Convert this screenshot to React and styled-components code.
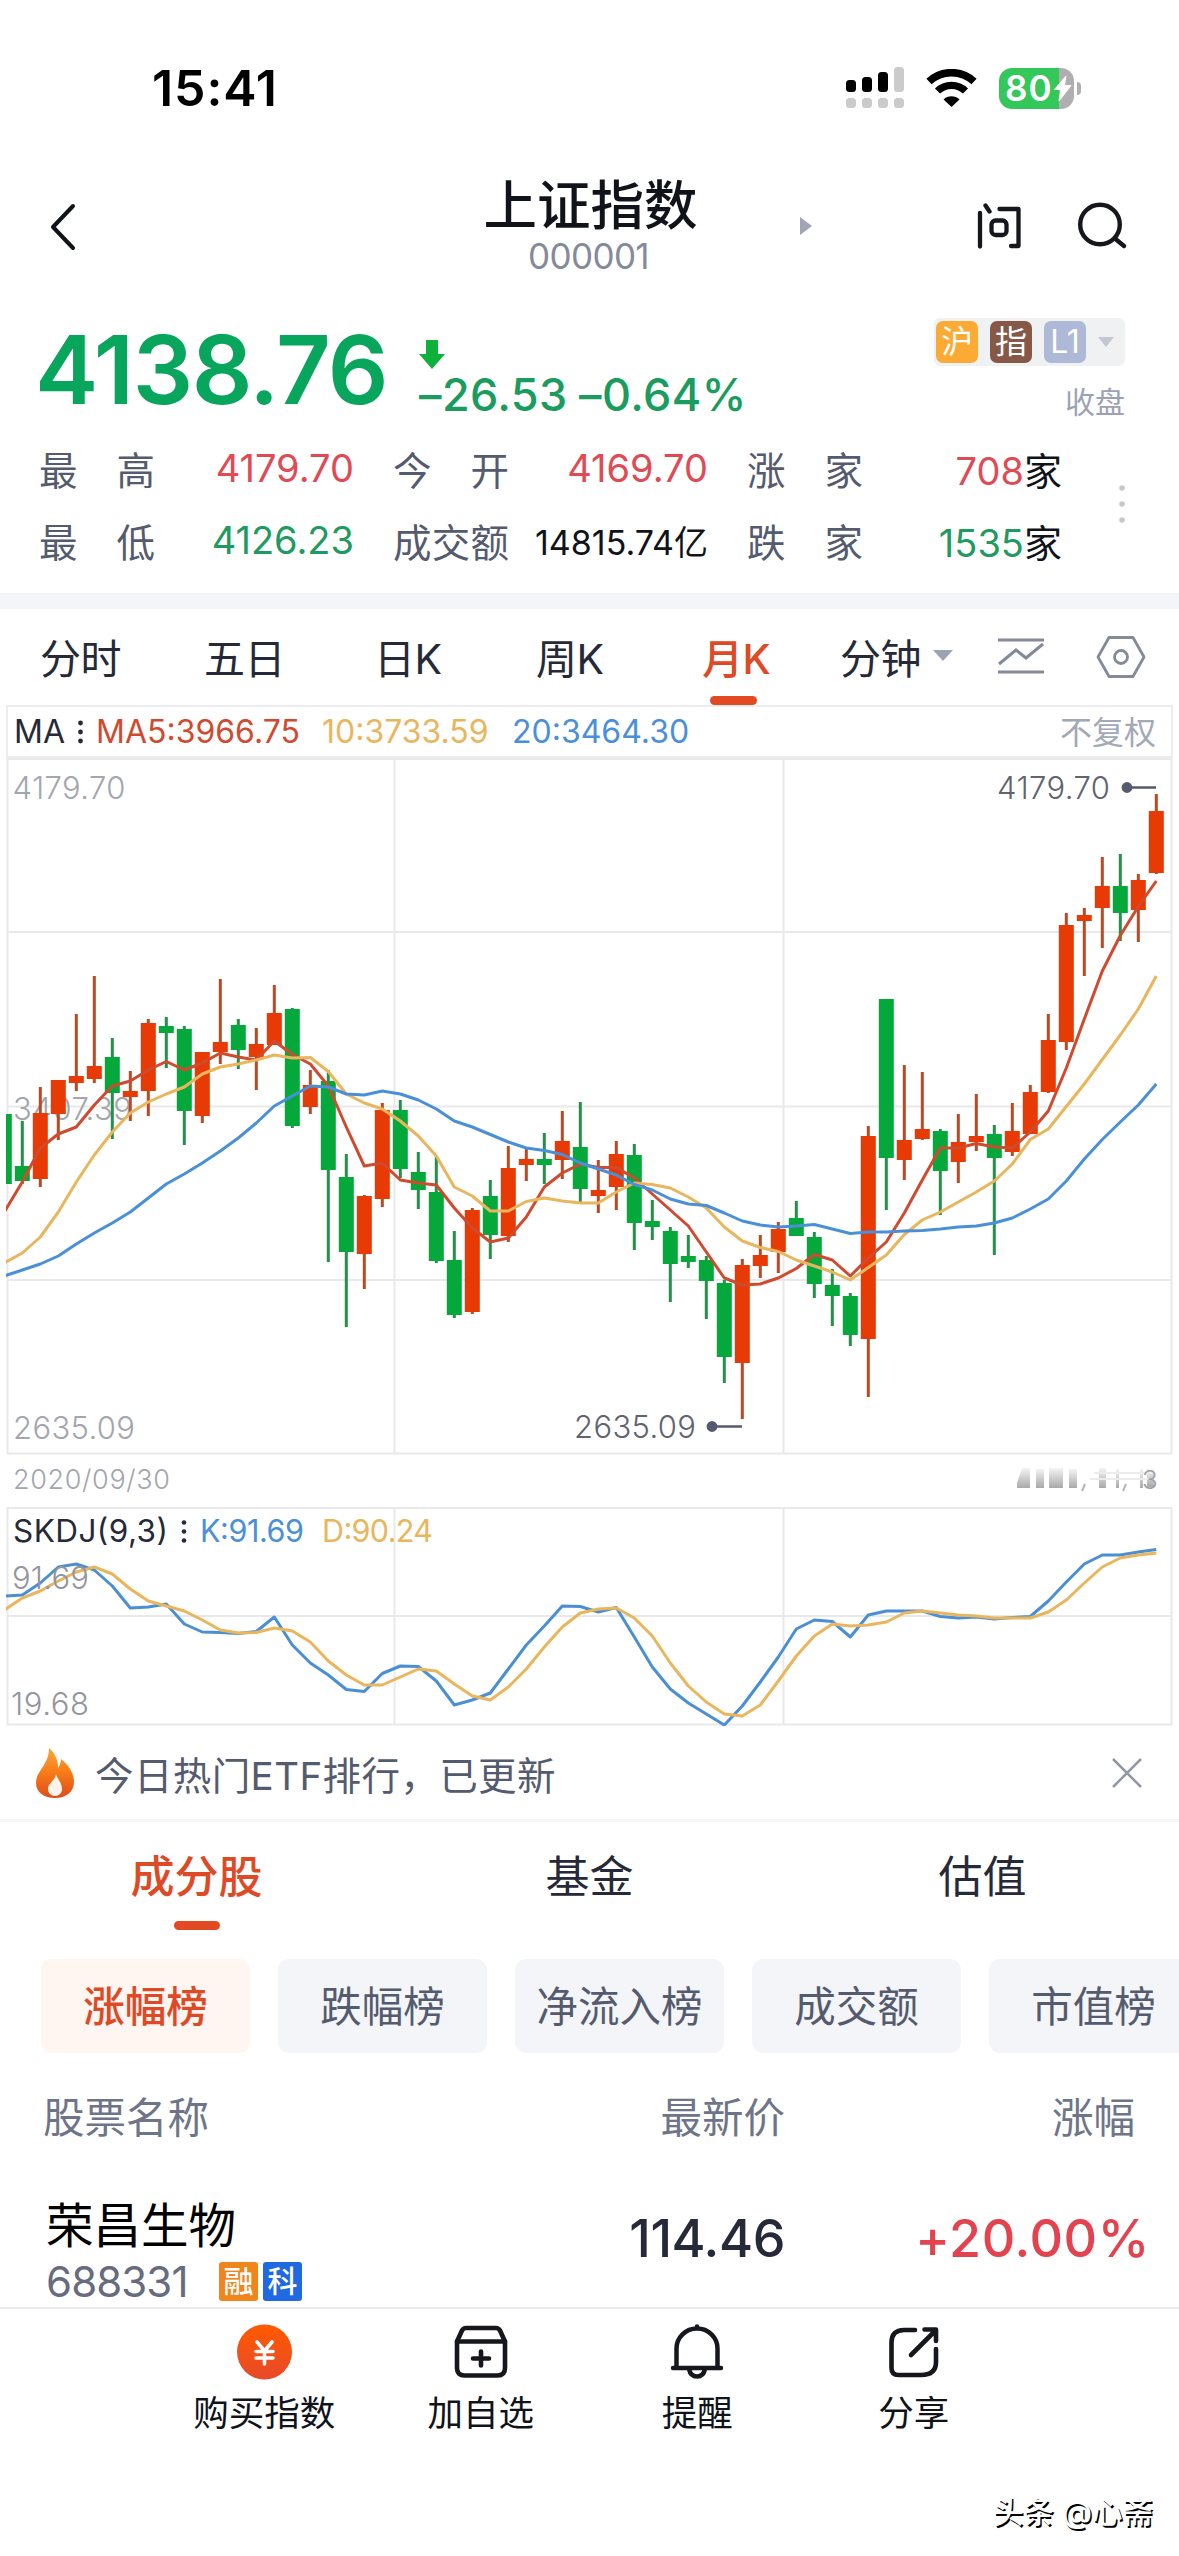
import React from 'react';
import styled, { createGlobalStyle } from 'styled-components';

const RED = '#e73a05';
const GREEN = '#05a93b';

const GlobalStyle = createGlobalStyle`
  * {
    box-sizing: border-box;
  }

  body {
    margin: 0;
    background: #ffffff;
    font-family: Inter, 'Noto Sans CJK SC', sans-serif;
  }

  svg {
    display: block;
    flex: none;
  }
`;

const Page = styled.div`
  width: 1179px;
  height: 2556px;
  overflow: hidden;
  background: #ffffff;
  color: #10131a;
  white-space: nowrap;
`;

const StatusBar = styled.div`
  display: flex;
  align-items: center;
  justify-content: space-between;
  height: 176px;
  padding: 0 98px 0 152px;
`;

const Clock = styled.div`
  font-size: 50px;
  font-weight: 600;
  letter-spacing: 0.9px;
  color: #000000;
`;

const StatusIcons = styled.div`
  display: flex;
  align-items: center;
`;

const SignalSvg = styled.svg`
  margin-right: 22px;
`;

const Battery = styled.div`
  display: flex;
  align-items: center;
  margin-left: 22px;
`;

const BatteryBody = styled.div`
  display: flex;
  align-items: center;
  gap: 1px;
  width: 75px;
  height: 41px;
  padding-left: 6px;
  border-radius: 13px;
  background: linear-gradient(90deg, #34c759 0 60px, #b0aeb0 60px);
  color: #ffffff;
  font-size: 35px;
  font-weight: 600;
  letter-spacing: 1px;
`;

const BatteryTip = styled.div`
  width: 4px;
  height: 13px;
  margin-left: 3px;
  border-radius: 0 5px 5px 0;
  background: #b0aeb0;
`;

const NavBar = styled.div`
  display: grid;
  grid-template-columns: 484px 213px 1fr;
  height: 138px;
`;

const NavBack = styled.div`
  padding: 27px 0 0 49px;
`;

const NavTitle = styled.div`
  display: flex;
  flex-direction: column;
  align-items: center;
`;

const Title = styled.div`
  height: 60px;
  font-size: 53.5px;
  font-weight: 500;
  line-height: 60px;
`;

const Code = styled.div`
  margin-right: 4px;
  font-size: 35px;
  line-height: 41px;
  letter-spacing: -0.6px;
  color: #858a9b;
`;

const NavRight = styled.div`
  display: flex;
  align-items: flex-start;
  padding: 26px 51px 0 103px;
`;

const NavActions = styled.div`
  display: flex;
  gap: 56px;
  margin-left: auto;
`;

const Caret = styled.div`
  width: 0;
  height: 0;
  border-left: ${(p) => p.$size / 2}px solid transparent;
  border-right: ${(p) => p.$size / 2}px solid transparent;
  border-top: ${(p) => p.$h}px solid ${(p) => p.$color};
`;

const NextCaret = styled.div`
  width: 0;
  height: 0;
  margin-top: 15px;
  border-top: 9px solid transparent;
  border-bottom: 9px solid transparent;
  border-left: 12px solid #a0a5b6;
`;

const Quote = styled.div`
  height: 279px;
  padding: 4px 54px 0 39px;
`;

const QuoteTop = styled.div`
  display: flex;
  height: 116px;
`;

const Price = styled.div`
  width: 379px;
  margin-left: -4px;
  margin-right: 4px;
  color: #07a65c;
  font-size: 95px;
  font-weight: 600;
  line-height: 103px;
  letter-spacing: -1.4px;
`;

const Change = styled.div`
  padding-top: 22px;
  color: #1a9c5f;
`;

const ChangeText = styled.div`
  margin-left: 1px;
  font-size: 45px;
  font-weight: 500;
  line-height: 50px;
  letter-spacing: 0.4px;
  word-spacing: -1px;
`;

const QuoteSide = styled.div`
  display: flex;
  flex-direction: column;
  align-items: flex-end;
  margin-left: auto;
`;

const TagBox = styled.div`
  display: flex;
  align-items: center;
  gap: 12px;
  width: 191px;
  height: 48px;
  padding-left: 2px;
  border-radius: 6px;
  background: #f0f1f3;
`;

const Tag = styled.div`
  display: flex;
  align-items: center;
  justify-content: center;
  width: 42px;
  height: 42px;
  border-radius: 7px;
  background: ${(p) => p.$bg};
  color: #ffffff;
  font-size: 32px;
  line-height: 42px;
`;

const MarketState = styled.div`
  margin-top: 14px;
  color: #9da2b3;
  font-size: 30px;
  line-height: 44px;
`;

const Stats = styled.div`
  display: grid;
  grid-template-columns: 315px 315px 315px;
  column-gap: 39px;
  grid-auto-rows: 72px;
  width: 1023px;
`;

const StatsRow = styled.div`
  display: flex;
  align-items: center;
  justify-content: space-between;
  margin-top: -2px;
`;

const Stat = styled.div`
  display: flex;
  align-items: center;
  justify-content: space-between;
  color: ${(p) => p.$color};
  font-size: ${(p) => (p.$small ? 34 : 38)}px;
  letter-spacing: 0;

  em {
    color: #10131a;
    font-style: normal;
    font-size: 38px;
  }
`;

const StatLabel = styled.span`
  display: flex;
  justify-content: space-between;
  width: 116px;
  color: #555b6e;
  font-size: 38.5px;
`;

const Band = styled.div`
  height: 16px;
  background: #f4f5f9;
`;

const PeriodBar = styled.div`
  display: flex;
  align-items: center;
  height: 96px;
  padding-left: 40px;
`;

const Period = styled.div`
  display: flex;
  align-items: center;
  gap: 12px;
  position: relative;
  width: ${(p) => p.$w}px;
  height: 96px;
  padding-bottom: 3px;
  color: ${(p) => (p.$active ? '#de4a26' : '#262a38')};
  font-size: 41px;
  font-weight: ${(p) => (p.$active ? 500 : 400)};
  letter-spacing: -0.5px;

  &::after {
    content: '';
    display: ${(p) => (p.$active ? 'block' : 'none')};
    position: absolute;
    left: 8px;
    bottom: 0;
    width: 47px;
    height: 9px;
    border-radius: 4.5px;
    background: #e24a24;
  }
`;

const TrendSvg = styled.svg`
  margin: 0 52px 2px 1px;
`;

const IndicatorRow = styled.div`
  display: flex;
  align-items: center;
  height: 53px;
  margin: 0 6px;
  padding: 0 15px 0 6px;
  border: 2px solid #ececee;
  color: #262a38;
  font-size: 32px;
`;

const Indicator = styled.span`
  width: ${(p) => p.$w}px;
  color: ${(p) => p.$color};
`;

const Adjust = styled.span`
  margin: 0 0 4px auto;
  color: #a3a8b6;
  font-size: 32px;
`;

const HotBar = styled.div`
  display: flex;
  align-items: center;
  height: 96px;
  padding: 0 37px 0 35px;
  border-bottom: 3px solid #f4f5f7;
`;

const HotText = styled.div`
  flex: 1;
  margin-left: 20px;
  color: #555b6e;
  font-size: 38.5px;
  letter-spacing: 0.4px;
`;

const Sections = styled.div`
  display: grid;
  grid-template-columns: repeat(3, 1fr);
  height: 137px;
`;

const Section = styled.div`
  display: flex;
  flex-direction: column;
  align-items: center;
  padding-top: 23px;
  color: ${(p) => (p.$active ? '#de4a26' : '#262a38')};
  font-size: 44px;
  font-weight: ${(p) => (p.$active ? 500 : 400)};
  line-height: 64px;

  &::after {
    content: '';
    width: 46px;
    height: 9px;
    margin-top: 12px;
    border-radius: 4.5px;
    background: ${(p) => (p.$active ? '#e24a24' : 'transparent')};
  }
`;

const Chips = styled.div`
  display: flex;
  gap: 28px;
  padding-left: 41px;
`;

const Chip = styled.div`
  flex: none;
  width: 209px;
  height: 94px;
  border-radius: 11px;
  background: ${(p) => (p.$active ? '#fff5f1' : '#f4f5f9')};
  color: ${(p) => (p.$active ? '#de4a26' : '#555b6e')};
  font-size: 41.5px;
  font-weight: ${(p) => (p.$active ? 500 : 400)};
  line-height: 96px;
  text-align: center;
`;

const TableRow = styled.div`
  display: grid;
  grid-template-columns: 1fr 300px 350px;
  align-items: center;
`;

const TableHead = styled(TableRow)`
  height: 126px;
  padding: 0 44px 3px 43px;
  color: #6f7589;
  font-size: 41.5px;

  span + span {
    text-align: right;
  }
`;

const StockRow = styled(TableRow)`
  height: 130px;
  padding: 0 33px 0 46px;
  border-bottom: 2px solid #ebebed;
`;

const Stock = styled.div`
  padding-top: 16px;
`;

const StockName = styled.div`
  color: #000000;
  font-size: 47.5px;
  line-height: 60px;
`;

const StockMeta = styled.div`
  display: flex;
  align-items: center;
  gap: 5px;
  height: 50px;
  color: #666b7e;
  font-size: 42px;
  letter-spacing: -0.9px;
`;

const StockCode = styled.span`
  width: 168px;
`;

const Badge = styled.span`
  width: 39px;
  height: 39px;
  border-radius: 3px;
  background: ${(p) => p.$bg};
  color: #ffffff;
  font-size: 30px;
  font-weight: 500;
  line-height: 38px;
  letter-spacing: 0;
  text-align: center;
`;

const LastPrice = styled.div`
  padding: 0 11px 9px 0;
  color: #262a38;
  font-size: 52px;
  font-weight: 500;
  letter-spacing: -0.4px;
  text-align: right;
`;

const Percent = styled(LastPrice)`
  margin-right: -4px;
  padding-right: 0;
  color: #e3434f;
  letter-spacing: 0.6px;
`;

const BottomBar = styled.div`
  display: grid;
  grid-template-columns: repeat(4, 216.5px);
  padding: 15px 0 0 156px;
`;

const Action = styled.div`
  display: flex;
  flex-direction: column;
  align-items: center;
  font-size: 35.5px;
  line-height: 50px;

  svg {
    margin-bottom: 9px;
  }
`;

const Watermark = styled.div`
  margin: 48px 26px 0 0;
  color: #ffffff;
  font-size: 30.5px;
  font-weight: 500;
  line-height: 50px;
  text-align: right;
  text-shadow: 1.5px 1.5px 0 #000000;
`;

// [high, body top, body bottom, low, up?] in chart pixels, one entry per month
const candles = [
  [354, 354, 424, 424, 0], [361, 406, 421, 424, 0], [327, 353, 419, 427, 1], [320, 320, 354, 380, 1],
  [254, 316, 323, 331, 1], [216, 306, 319, 323, 1], [278, 297, 333, 379, 0], [311, 331, 337, 361, 1],
  [259, 263, 331, 356, 1], [257, 266, 273, 308, 0], [266, 269, 351, 385, 0], [292, 292, 356, 363, 1],
  [219, 282, 292, 304, 1], [259, 265, 290, 309, 0], [268, 284, 297, 330, 1], [225, 253, 285, 285, 1],
  [248, 249, 366, 368, 0], [310, 325, 347, 354, 1], [310, 321, 410, 502, 0], [394, 417, 492, 567, 0],
  [435, 436, 494, 529, 1], [343, 350, 439, 447, 1], [340, 350, 409, 418, 0], [392, 412, 430, 449, 0],
  [396, 432, 501, 503, 0], [471, 500, 555, 558, 0], [448, 450, 552, 554, 1], [420, 436, 475, 499, 0],
  [386, 408, 476, 482, 1], [387, 399, 405, 421, 1], [373, 399, 405, 424, 0], [351, 381, 400, 419, 1],
  [342, 387, 429, 442, 0], [400, 430, 436, 453, 1], [381, 394, 427, 450, 1], [384, 395, 463, 490, 0],
  [440, 461, 467, 480, 0], [467, 471, 504, 542, 0], [475, 496, 502, 508, 0], [496, 500, 521, 559, 0],
  [520, 523, 597, 623, 0], [499, 505, 603, 659, 1], [475, 495, 506, 518, 1], [462, 469, 492, 513, 1],
  [441, 458, 476, 476, 0], [472, 477, 524, 538, 0], [509, 525, 536, 566, 0], [533, 536, 575, 586, 0],
  [366, 376, 579, 637, 1], [239, 239, 398, 450, 0], [305, 380, 400, 420, 1], [312, 369, 379, 380, 1],
  [369, 371, 411, 455, 0], [354, 382, 402, 423, 1], [334, 376, 382, 391, 1], [365, 374, 398, 495, 0],
  [343, 371, 392, 396, 1], [325, 332, 374, 374, 1], [254, 280, 332, 333, 1], [153, 165, 282, 290, 1],
  [148, 155, 161, 216, 1], [97, 126, 148, 188, 1], [94, 126, 153, 181, 0], [114, 120, 150, 182, 1],
  [34, 51, 113, 114, 1],
];

const ma5 = [
  452, 422, 388, 374, 367, 345, 326, 321, 310, 301.5, 310, 303, 293, 297, 300, 281, 294.5, 304, 326, 367,
  406, 403, 420, 423, 425, 448, 468, 482, 478, 457, 427, 413, 404, 407.5, 407.5, 418, 434, 450, 466, 492,
  518, 525, 524, 518, 508.5, 494.5, 500, 516, 498, 482, 453, 420, 388, 388, 383.5, 387, 388, 372, 351, 308,
  259, 211, 175.5, 146.5, 121,
];

const ma10 = [
  503, 493, 477, 452, 422, 395, 372, 353, 342, 334, 327, 314, 307, 304, 300, 295, 298, 297.5, 311.5, 334,
  343, 349, 361, 376, 396, 427, 436, 451, 451, 441.5, 438, 441, 443, 443, 432, 423, 424.5, 428, 437, 448,
  467, 481, 487.5, 491.5, 500, 506, 512, 520, 507.5, 495, 474.5, 460, 452, 442, 432, 421, 404, 379.5, 369,
  346.5, 324, 299.5, 275, 249, 216,
];

const ma20 = [
  516, 510, 504, 496, 484, 473, 463, 452, 438, 424, 414, 403, 391, 378, 363, 346, 336, 326, 327, 334,
  335, 331, 334, 340, 349, 361, 367, 374.5, 382, 388, 390.5, 394.5, 403, 409, 415, 424.5, 430, 439, 444, 445.5,
  453, 461, 465, 467, 466, 464.5, 469, 473.5, 472, 472, 471, 470.5, 469, 467, 466, 463, 458, 449, 439, 421,
  399, 379.5, 362, 345, 324,
];

const kLine = [
  88, 87, 75, 59, 56, 62, 78, 100, 99, 96, 116, 124, 124.5, 125.5, 123.5, 109, 137, 155, 167, 181.5,
  183.5, 165.5, 158, 158.5, 173, 197, 192, 185, 161, 137, 118, 98, 98.5, 104, 99.5, 129, 159, 181, 195, 206,
  217, 198, 174, 149, 121, 112, 113.5, 129, 107, 103, 103, 103, 108.5, 110, 109, 111, 109.5, 108.5, 93, 74,
  56, 47, 47, 44, 41.5,
];

const dLine = [
  102, 90, 83, 73, 64, 59, 66, 81, 93, 98, 103, 112, 122, 125, 124.5, 120, 123, 134, 153, 167,
  177, 177, 169, 161, 163, 176, 188, 192, 179, 161, 139, 119, 105, 101, 100, 110, 128, 155, 178, 194,
  206, 208, 197, 173, 148, 128, 116, 118, 117, 114, 105, 103, 105, 107, 108, 110, 110, 110, 104, 92,
  75, 59, 50, 47, 45,
];

const xAt = (i) => 4.3 + i * 18;
const toPoints = (list) => list.map((y, i) => `${xAt(i)},${y}`).join(' ');

const Line = ({ data, color }) => (
  <polyline points={toPoints(data)} fill="none" stroke={color} strokeWidth="3" strokeLinejoin="round" />
);

const AxisText = ({ x, y, w, size = 31, color = '#a3a6ad', children }) => (
  <text x={x} y={y} fontSize={size} fontWeight="300" fill={color} textLength={w}>
    {children}
  </text>
);

// viewBox starts at y = -2 so that the data values stay relative to the grid
const KChart = () => (
  <svg width="1179" height="697" viewBox="0 -2 1179 697">
    <defs>
      <clipPath id="plot">
        <rect x="6" y="-2" width="1166" height="700" />
      </clipPath>
    </defs>
    <g stroke="#e9e9ea" strokeWidth="2" fill="none">
      <rect x="7.5" y="-1" width="1164" height="694.5" />
      <path d="M8 172H1172M8 346.5H1172M8 520H1172M394.5 -1V693M783.5 -1V693" />
    </g>
    <AxisText x={12.5} y={39} w={113}>4179.70</AxisText>
    <AxisText x={13} y={360} w={119}>3407.39</AxisText>
    <AxisText x={13} y={679} w={122}>2635.09</AxisText>
    <g clipPath="url(#plot)">
      {candles.map(([high, top, bottom, low, up], i) => (
        <g key={i}>
          <rect x={xAt(i) - 1.5} y={high} width="3" height={low - high} fill={up ? '#b94a26' : '#249149'} />
          <rect x={xAt(i) - 7.5} y={top} width="15" height={bottom - top} fill={up ? RED : GREEN} />
        </g>
      ))}
      <Line data={ma5} color="#cf4a2f" />
      <Line data={ma10} color="#e9b65d" />
      <Line data={ma20} color="#4a90d9" />
    </g>
    <AxisText x={997} y={38.5} w={113} color="#60646f">4179.70</AxisText>
    <AxisText x={574} y={678} w={122} color="#60646f">2635.09</AxisText>
    <g stroke="#555a70" fill="#555a70" strokeWidth="2.4">
      <path d="M1127 27.5H1156M712 666.5H742" />
      <circle cx="1127" cy="27.5" r="4.2" />
      <circle cx="712" cy="666.5" r="4.2" />
    </g>
  </svg>
);

const DateRow = () => (
  <svg width="1179" height="52" viewBox="0 0 1179 52">
    <defs>
      <linearGradient id="smudge" x1="0" y1="0" x2="0" y2="1">
        <stop offset="0" stopColor="#f4f4f4" />
        <stop offset="1" stopColor="#a9a9a9" />
      </linearGradient>
    </defs>
    <AxisText x={13} y={34} w={157} size={27}>2020/09/30</AxisText>
    <g fill="url(#smudge)">
      <path d="M1017 33V28L1022 13H1030V33Z" />
      <rect x="1036" y="14" width="8" height="19" />
      <rect x="1049" y="13" width="14" height="20" />
      <rect x="1069" y="14" width="8" height="19" />
      <rect x="1099" y="13" width="7" height="20" />
      <rect x="1116" y="14" width="3" height="19" />
      <rect x="1140" y="14" width="3" height="19" />
      <rect x="1147" y="14" width="7" height="18" />
    </g>
    <path d="M1094 18H1154M1090 24H1150" stroke="#ececec" strokeWidth="2" />
    <path d="M1085 29L1082 36M1126 29L1123 36" stroke="#b5b5b5" strokeWidth="2" />
    <text x="1142" y="33.5" fontSize="26" fontWeight="300" fill="#a0a0a0">3</text>
  </svg>
);

const SkdjChart = () => (
  <svg width="1179" height="219" viewBox="0 -1 1179 219">
    <g stroke="#e9e9ea" strokeWidth="2" fill="none">
      <rect x="7.5" y="0" width="1164" height="216.5" />
      <path d="M8 108H1172M394.5 0V216M783.5 0V216" />
    </g>
    <text x="13" y="34" fontSize="31.5" fill="#262a38" textLength="155">SKDJ(9,3)</text>
    <g fill="#262a38">
      <circle cx="184" cy="14.5" r="2.3" />
      <circle cx="184" cy="23.5" r="2.3" />
      <circle cx="184" cy="32.5" r="2.3" />
    </g>
    <text x="200" y="34" fontSize="30.5" fill="#4a90d9" textLength="104">K:91.69</text>
    <text x="322" y="34" fontSize="30.5" fill="#e9b65d" textLength="111">D:90.24</text>
    <g clipPath="url(#plot)">
      <Line data={kLine} color="#4a8fd3" />
      <Line data={dLine} color="#e9b65d" />
    </g>
    <AxisText x={12} y={80.5} w={77} color="#93969e">91.69</AxisText>
    <AxisText x={11} y={206.5} w={78} color="#93969e">19.68</AxisText>
  </svg>
);

const SignalIcon = () => (
  <SignalSvg width="58" height="42" viewBox="0 0 58 42">
    <g fill="#000000">
      <rect x="0" y="13" width="10" height="12" rx="3.5" />
      <rect x="16" y="10" width="10" height="15" rx="3.5" />
      <rect x="32" y="5" width="10" height="20" rx="3.5" />
    </g>
    <g fill="#cbcbcb">
      <rect x="48" y="0" width="10" height="25" rx="3.5" />
      <rect x="0" y="31" width="10" height="10" rx="3.5" />
      <rect x="16" y="31" width="10" height="10" rx="3.5" />
      <rect x="32" y="31" width="10" height="10" rx="3.5" />
      <rect x="48" y="31" width="10" height="10" rx="3.5" />
    </g>
  </SignalSvg>
);

const WifiIcon = () => (
  <svg width="51" height="38" viewBox="0 0 51 38">
    <path d="M3 12.5A33 33 0 0 1 48 12.5" fill="none" stroke="#000000" strokeWidth="7.6" />
    <path d="M11.5 22A20 20 0 0 1 39.5 22" fill="none" stroke="#000000" strokeWidth="7.2" />
    <path d="M17.5 30.5A11.5 11.5 0 0 1 33.5 30.5L25.5 38Z" fill="#000000" />
  </svg>
);

const BoltIcon = () => (
  <svg width="18" height="27" viewBox="0 0 18 27">
    <path d="M12 1L0.5 14.5H7L5 26L17 10.5H10.5Z" fill="#ffffff" stroke="#ffffff" strokeLinejoin="round" />
  </svg>
);

const BackIcon = () => (
  <svg width="28" height="48" viewBox="0 0 28 48">
    <path d="M24 3L4 24L24 45" fill="none" stroke="#10131a" strokeWidth="4" strokeLinecap="round" strokeLinejoin="round" />
  </svg>
);

const AskIcon = () => (
  <svg width="44" height="48" viewBox="0 0 44 48">
    <g fill="none" stroke="#15171d" strokeWidth="4.3" strokeLinecap="round" strokeLinejoin="round">
      <path d="M3 11V44.5M8.5 3.5L12.5 9.5M22.5 7H41.5V44H34" />
      <rect x="14.5" y="18.5" width="15" height="14.5" rx="4" />
    </g>
  </svg>
);

const SearchIcon = () => (
  <svg width="51" height="48" viewBox="0 0 51 48">
    <g fill="none" stroke="#15171d" strokeWidth="4.4" strokeLinecap="round">
      <circle cx="23" cy="22.5" r="19.8" />
      <path d="M38.5 37L47 44" />
    </g>
  </svg>
);

const DownArrow = () => (
  <svg width="28" height="30" viewBox="0 0 28 30">
    <path d="M8 0H20V14H27L14 29L1 14H8Z" fill="#0eb13b" />
  </svg>
);

const MoreDots = () => (
  <svg width="6" height="40" viewBox="0 0 6 40">
    <g fill="#c6c8ce">
      <circle cx="3" cy="4" r="2.8" />
      <circle cx="3" cy="20" r="2.8" />
      <circle cx="3" cy="36" r="2.8" />
    </g>
  </svg>
);

const MiniDots = () => (
  <svg width="18" height="26" viewBox="0 0 18 26">
    <circle cx="2.5" cy="4" r="2.4" fill="#262a38" />
    <circle cx="2.5" cy="13" r="2.4" fill="#262a38" />
    <circle cx="2.5" cy="22" r="2.4" fill="#262a38" />
  </svg>
);

const TrendIcon = () => (
  <TrendSvg width="46" height="38" viewBox="0 0 46 38">
    <path d="M0 3H46M0 35H46M1 27L18 13L28 21L45 7" fill="none" stroke="#858a9b" strokeWidth="3" />
  </TrendSvg>
);

const HexIcon = () => (
  <svg width="50" height="42" viewBox="0 0 50 42">
    <g fill="none" stroke="#858a9b" strokeWidth="2.8" strokeLinejoin="round">
      <path d="M13 1.5H37L48 21L37 40.5H13L2 21Z" />
      <circle cx="25" cy="21" r="6.5" />
    </g>
  </svg>
);

const FlameIcon = () => (
  <svg width="40" height="52" viewBox="0 0 40 52">
    <defs>
      <linearGradient id="flame" x1="0" y1="0" x2="0" y2="1">
        <stop offset="0" stopColor="#fba83c" />
        <stop offset="0.5" stopColor="#f97a16" />
        <stop offset="1" stopColor="#dd4c1c" />
      </linearGradient>
    </defs>
    <path
      d="M14 1C20 6 23 13 23 21C25 18 26 15 26 12C34 18 39 27 39 35C39 45 31 51 20 51C9 51 1 45 1 36C1 24 14 18 14 1Z"
      fill="url(#flame)"
    />
    <path d="M21 27C20 34 13 36 13 42C13 46 16 49 20 49C24 49 27 46 27 42C27 36 23 33 21 27Z" fill="#fff4ea" />
  </svg>
);

const CloseIcon = () => (
  <svg width="30" height="30" viewBox="0 0 30 30">
    <path d="M1 1L29 29M29 1L1 29" fill="none" stroke="#9297a4" strokeWidth="2.5" />
  </svg>
);

const YuanIcon = () => (
  <svg width="55" height="56" viewBox="0 0 55 56">
    <defs>
      <linearGradient id="coin" x1="0" y1="0" x2="0" y2="1">
        <stop offset="0" stopColor="#ff5a00" />
        <stop offset="1" stopColor="#e8492a" />
      </linearGradient>
    </defs>
    <circle cx="27.5" cy="28" r="27.5" fill="url(#coin)" />
    <path
      d="M20 18L27.5 27L35 18M27.5 27V40M19 27.5H36M19 34H36"
      fill="none"
      stroke="#ffffff"
      strokeWidth="3.6"
      strokeLinecap="round"
    />
  </svg>
);

const AddIcon = () => (
  <svg width="56" height="56" viewBox="0 0 56 56">
    <g fill="none" stroke="#15171d" strokeWidth="4.6" strokeLinecap="round" strokeLinejoin="round">
      <path d="M4 17.5L9 6.5Q10.5 4 13 4H43Q45.5 4 47 6.5L52 17.5V44Q52 51.5 44.5 51.5H11.5Q4 51.5 4 44Z" />
      <path d="M4 17.5H52M28 27.5V41.5M20 34.5H36" />
    </g>
  </svg>
);

const BellIcon = () => (
  <svg width="56" height="56" viewBox="0 0 56 56">
    <g fill="none" stroke="#15171d" strokeWidth="4.5" strokeLinecap="round" strokeLinejoin="round">
      <path d="M4 44H52M7.5 44V24.5A20.5 20 0 0 1 48.5 24.5V44M28 2.5V4.5" />
      <path d="M20 45Q21.5 52.5 28 52.5Q34.5 52.5 36 45" />
    </g>
  </svg>
);

const ShareIcon = () => (
  <svg width="56" height="56" viewBox="0 0 56 56">
    <g fill="none" stroke="#15171d" strokeWidth="4.6" strokeLinecap="round" strokeLinejoin="round">
      <path d="M29 6H18Q5.5 6 5.5 18.5V44Q5.5 51 12.5 51H35Q50 51 50 38V25" />
      <path d="M25 31L49 7M38.5 5.5H50V17" />
    </g>
  </svg>
);

const stats = [
  { label: '最高', value: '4179.70', color: '#e04a55' },
  { label: '今开', value: '4169.70', color: '#e04a55' },
  { label: '涨家', value: '708', color: '#e04a55', unit: '家' },
  { label: '最低', value: '4126.23', color: '#1f9a61' },
  { label: '成交额', value: '14815.74亿', color: '#10131a', small: true },
  { label: '跌家', value: '1535', color: '#1f9a61', unit: '家' },
];

const periods = [
  { name: '分时', w: 164 },
  { name: '五日', w: 170 },
  { name: '日K', w: 162 },
  { name: '周K', w: 166 },
  { name: '月K', w: 138, active: true },
];

const chips = ['涨幅榜', '跌幅榜', '净流入榜', '成交额', '市值榜'];

const actions = [
  { name: '购买指数', Icon: YuanIcon },
  { name: '加自选', Icon: AddIcon },
  { name: '提醒', Icon: BellIcon },
  { name: '分享', Icon: ShareIcon },
];

const App = () => {
  return (
    <>
      <GlobalStyle />
      <Page>
        <StatusBar>
          <Clock>15:41</Clock>
          <StatusIcons>
            <SignalIcon />
            <WifiIcon />
            <Battery>
              <BatteryBody>
                80
                <BoltIcon />
              </BatteryBody>
              <BatteryTip />
            </Battery>
          </StatusIcons>
        </StatusBar>

        <NavBar>
          <NavBack>
            <BackIcon />
          </NavBack>
          <NavTitle>
            <Title>上证指数</Title>
            <Code>000001</Code>
          </NavTitle>
          <NavRight>
            <NextCaret />
            <NavActions>
              <AskIcon />
              <SearchIcon />
            </NavActions>
          </NavRight>
        </NavBar>

        <Quote>
          <QuoteTop>
            <Price>4138.76</Price>
            <Change>
              <DownArrow />
              <ChangeText>–26.53 –0.64%</ChangeText>
            </Change>
            <QuoteSide>
              <TagBox>
                <Tag $bg="#fbab34">沪</Tag>
                <Tag $bg="#855848">指</Tag>
                <Tag $bg="#adb9d6">L1</Tag>
                <Caret $size={16} $h={10} $color="#c3c7d2" />
              </TagBox>
              <MarketState>收盘</MarketState>
            </QuoteSide>
          </QuoteTop>
          <StatsRow>
            <Stats>
              {stats.map((s) => (
                <Stat key={s.label} $color={s.color} $small={s.small}>
                  <StatLabel>
                    {s.label.split('').map((c) => (
                      <span key={c}>{c}</span>
                    ))}
                  </StatLabel>
                  <span>
                    {s.value}
                    {s.unit && <em>{s.unit}</em>}
                  </span>
                </Stat>
              ))}
            </Stats>
            <MoreDots />
          </StatsRow>
        </Quote>

        <Band />

        <PeriodBar>
          {periods.map((p) => (
            <Period key={p.name} $w={p.w} $active={p.active}>
              {p.name}
            </Period>
          ))}
          <Period $w={157}>
            分钟
            <Caret $size={20} $h={11} $color="#9ea3b3" />
          </Period>
          <TrendIcon />
          <HexIcon />
        </PeriodBar>

        <IndicatorRow>
          <Indicator $w={64}>MA</Indicator>
          <MiniDots />
          <Indicator $w={226} $color="#cf4a2f">MA5:3966.75</Indicator>
          <Indicator $w={190} $color="#e9b65d">10:3733.59</Indicator>
          <Indicator $w={200} $color="#4a90d9">20:3464.30</Indicator>
          <Adjust>不复权</Adjust>
        </IndicatorRow>
        <KChart />
        <DateRow />
        <SkdjChart />

        <HotBar>
          <FlameIcon />
          <HotText>今日热门ETF排行，已更新</HotText>
          <CloseIcon />
        </HotBar>

        <Sections>
          <Section $active>成分股</Section>
          <Section>基金</Section>
          <Section>估值</Section>
        </Sections>

        <Chips>
          {chips.map((name, i) => (
            <Chip key={name} $active={i === 0}>
              {name}
            </Chip>
          ))}
        </Chips>

        <TableHead>
          <span>股票名称</span>
          <span>最新价</span>
          <span>涨幅</span>
        </TableHead>
        <StockRow>
          <Stock>
            <StockName>荣昌生物</StockName>
            <StockMeta>
              <StockCode>688331</StockCode>
              <Badge $bg="#f0851c">融</Badge>
              <Badge $bg="#2169e2">科</Badge>
            </StockMeta>
          </Stock>
          <LastPrice>114.46</LastPrice>
          <Percent>+20.00%</Percent>
        </StockRow>

        <BottomBar>
          {actions.map(({ name, Icon }) => (
            <Action key={name}>
              <Icon />
              {name}
            </Action>
          ))}
        </BottomBar>
        <Watermark>头条 @心斋</Watermark>
      </Page>
    </>
  );
};

export default App;
